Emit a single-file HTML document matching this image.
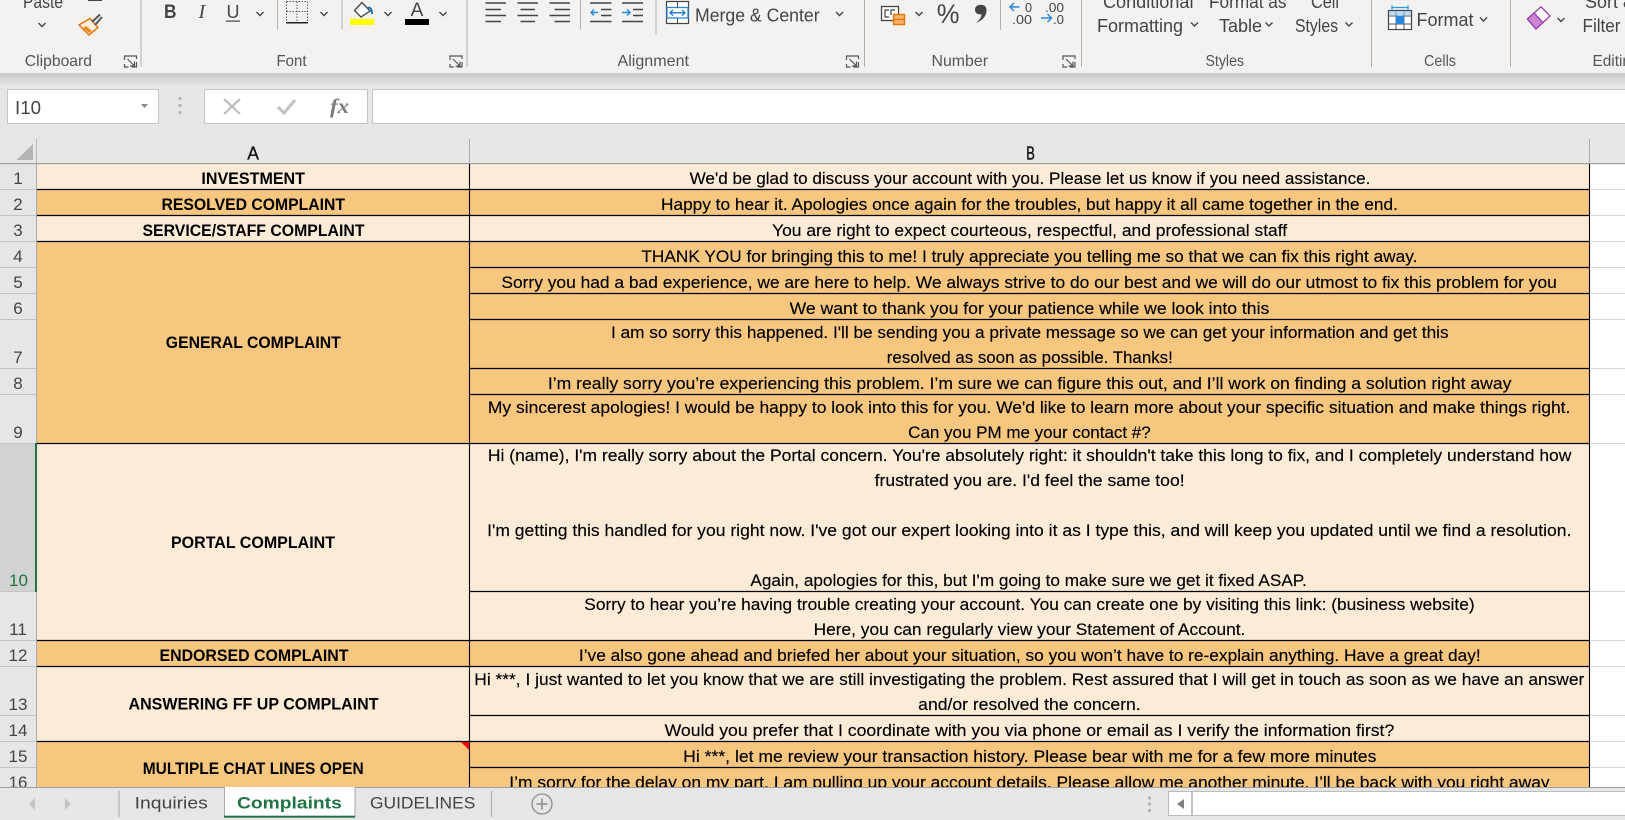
<!DOCTYPE html>
<html><head><meta charset="utf-8"><title>Complaints</title>
<style>
html,body{margin:0;padding:0;width:1625px;height:820px;overflow:hidden;background:#e6e6e6}
svg{display:block}
text{font-family:"Liberation Sans",sans-serif;white-space:pre}
.c{font-size:16.8px;fill:#000;stroke:#000;stroke-width:.15px}
.a{font-size:16.6px;font-weight:700;fill:#000}
.n{font-size:17px;fill:#444;text-anchor:middle}
.g{font-size:16px;fill:#555}
.b{font-size:18px;fill:#444}
.t{font-size:17px;fill:#444}
.d{font-size:12.5px;fill:#444}
.ch{fill:none;stroke:#444;stroke-width:1.4}
.ln{fill:none;stroke:#444;stroke-width:1.4}
.la{fill:none;stroke:#555;stroke-width:1.2}
</style></head><body>
<svg width="1625" height="820" viewBox="0 0 1625 820" xmlns="http://www.w3.org/2000/svg">
<defs>
<linearGradient id="sh" x1="0" y1="0" x2="0" y2="1"><stop offset="0" stop-color="#c9c9c9"/><stop offset="1" stop-color="#e6e6e6"/></linearGradient>
<path id="v" class="ch" d="M-3.5 -2L0 1.5L3.5 -2"/>
<path id="l" class="la" d="M0 4V0H12V3M0 8V11H4M12 6V11H7M3 3L10 10M10 5.5V10H5.5"/>
</defs>

<!-- ribbon -->
<rect x="0" y="0" width="1625" height="73" fill="#f3f2f1"/>
<rect x="0" y="73" width="1625" height="13" fill="url(#sh)"/>
<g fill="#b3b0ad">
<rect x="140.500" y="0" width="1" height="67"/><rect x="466.500" y="0" width="1" height="67"/><rect x="864" y="0" width="1" height="67"/><rect x="1081" y="0" width="1" height="67"/><rect x="1371" y="0" width="1" height="67"/><rect x="1510" y="0" width="1" height="67"/>
<rect x="277" y="0" width="1" height="30"/><rect x="341.500" y="0" width="1" height="30"/><rect x="580" y="0" width="1" height="30"/><rect x="655.500" y="0" width="1" height="35"/><rect x="1000" y="0" width="1" height="30"/>
</g>

<text class="g" x="24.800" y="66" textLength="67.200" lengthAdjust="spacingAndGlyphs">Clipboard</text>
<text class="g" x="276.500" y="66" textLength="30" lengthAdjust="spacingAndGlyphs">Font</text>
<text class="g" x="617.500" y="66" textLength="71.500" lengthAdjust="spacingAndGlyphs">Alignment</text>
<text class="g" x="931.500" y="66" textLength="56.500" lengthAdjust="spacingAndGlyphs">Number</text>
<text class="g" x="1205.500" y="66" textLength="38.500" lengthAdjust="spacingAndGlyphs">Styles</text>
<text class="g" x="1424" y="66" textLength="32" lengthAdjust="spacingAndGlyphs">Cells</text>
<text class="g" x="1592.500" y="66" textLength="47" lengthAdjust="spacingAndGlyphs">Editing</text>

<use href="#l" x="124.500" y="56"/><use href="#l" x="450" y="56"/><use href="#l" x="846.500" y="56"/><use href="#l" x="1063" y="56"/>

<!-- clipboard -->
<text class="b" x="23" y="8" textLength="40" lengthAdjust="spacingAndGlyphs">Paste</text>
<use href="#v" x="42" y="25"/>
<rect x="88" y="0" width="14" height="1" fill="#444"/>
<path d="M79 25L90 18.500L98 27.500L89 35Z" fill="#fdf0e0" stroke="#e8760c" stroke-width="1.500"/>
<path d="M83 28L86 26L92 31L89 33Z" fill="#ee8a1e"/>
<path d="M92 22L100 14.500M95 25L102 17" stroke="#555" stroke-width="2" fill="none"/>

<!-- font -->
<text x="164" y="18" font-size="19" font-weight="700" fill="#444" textLength="12.500" lengthAdjust="spacingAndGlyphs">B</text>
<text x="198.500" y="18" font-size="20" font-style="italic" fill="#444" style="font-family:'Liberation Serif',serif">I</text>
<text x="226.500" y="18" font-size="18" fill="#444" textLength="13" lengthAdjust="spacingAndGlyphs">U</text>
<rect x="226" y="20.500" width="14" height="1.200" fill="#444"/>
<use href="#v" x="260" y="14"/>
<path d="M286.500 1.500H307.500V21M286.500 1.500V21M297 1.500V21M286.500 11.500H307.500" fill="none" stroke="#555" stroke-width="1" stroke-dasharray="1.500 1.500"/>
<rect x="286" y="22" width="22" height="1.500" fill="#222"/>
<use href="#v" x="324" y="14"/>
<path d="M362 2.500L370 11L361 17L354.500 10.500Z" fill="#fff" stroke="#444" stroke-width="1.300"/>
<path d="M367 9C369 6 372 8 372 14" fill="none" stroke="#1f6fb5" stroke-width="2"/>
<rect x="350" y="19" width="24" height="6" fill="#ffff00"/>
<use href="#v" x="388" y="14"/>
<text x="417" y="16" font-size="19" fill="#444" text-anchor="middle">A</text>
<rect x="405" y="19" width="24" height="6" fill="#000"/>
<use href="#v" x="443" y="14"/>

<!-- alignment -->
<path class="ln" d="M485.500 3H506M485.500 9.500H501M485.500 15.500H506M485.500 21.500H501"/>
<path class="ln" d="M517.500 3H538M520.500 9.500H535M517.500 15.500H538M520.500 21.500H535"/>
<path class="ln" d="M549.500 3H570M554.500 9.500H570M549.500 15.500H570M554.500 21.500H570"/>
<path class="ln" d="M590 3H611.500M601 9.500H611.500M601 15.500H611.500M590 21.500H611.500"/>
<path d="M598 12.500H591M594 9.500L591 12.500L594 15.500" fill="none" stroke="#2b88d8" stroke-width="1.500"/>
<path class="ln" d="M622 3H643M633 9.500H643M633 15.500H643M622 21.500H643"/>
<path d="M622 12.500H630M627 9.500L630 12.500L627 15.500" fill="none" stroke="#2b88d8" stroke-width="1.500"/>
<rect x="666.500" y="1.500" width="22" height="22" fill="#fff" stroke="#444" stroke-width="1.200"/>
<path d="M667 7.500H688M667 18H688M677.500 2V7M677.500 18V23" stroke="#444" stroke-width="1" fill="none"/>
<rect x="667" y="7.500" width="21" height="10.500" fill="#fff" stroke="#2b88d8" stroke-width="1.300"/>
<path d="M670 12.800H685M673 10L670 12.800L673 15.600M682 10L685 12.800L682 15.600" fill="none" stroke="#1f78c8" stroke-width="1.300"/>
<text class="b" x="695" y="21.500" textLength="124.600" lengthAdjust="spacingAndGlyphs">Merge &amp; Center</text>
<use href="#v" x="839.500" y="14"/>

<!-- number -->
<rect x="881.500" y="6.500" width="17" height="14" fill="#fff" stroke="#444" stroke-width="1.300"/>
<path d="M889 10H885V17H889M895 10H891V15" fill="none" stroke="#444" stroke-width="1.200"/>
<path d="M893.500 14.500H904.500V24.500H893.500Z" fill="#f6b26f" stroke="#e8760c" stroke-width="1.400"/>
<path d="M893.500 19.500H904.500" stroke="#e8760c" stroke-width="1.400"/>
<use href="#v" x="919" y="14"/>
<text x="936.700" y="23" font-size="27" fill="#444" textLength="22.700" lengthAdjust="spacingAndGlyphs">%</text>
<path d="M979 5C983 4 986.500 6 986.500 10C986.500 16 983 20 976 23C979.500 20 981.500 17 981.500 14.500C977 14.500 975 12.500 975 10C975 7 976.500 5.500 979 5Z" fill="#444"/>
<path d="M1019.500 7H1010M1014 3L1010 7L1014 11" fill="none" stroke="#2b88d8" stroke-width="1.500"/>
<text class="d" x="1025" y="12" font-size="13" textLength="7" lengthAdjust="spacingAndGlyphs">0</text>
<text class="d" x="1012" y="24" textLength="20" lengthAdjust="spacingAndGlyphs">.00</text>
<text class="d" x="1045" y="12" textLength="19" lengthAdjust="spacingAndGlyphs">.00</text>
<path d="M1041 18H1051.500M1047.500 14L1051.500 18L1047.500 22" fill="none" stroke="#2b88d8" stroke-width="1.500"/>
<text class="d" x="1053" y="24" textLength="11" lengthAdjust="spacingAndGlyphs">.0</text>

<!-- styles -->
<text class="b" x="1103" y="8" textLength="90.500" lengthAdjust="spacingAndGlyphs">Conditional</text>
<text class="b" x="1097" y="32" textLength="86" lengthAdjust="spacingAndGlyphs">Formatting</text>
<use href="#v" x="1194.500" y="24.500"/>
<text class="b" x="1209" y="8" textLength="77.500" lengthAdjust="spacingAndGlyphs">Format as</text>
<text class="b" x="1219" y="32" textLength="43" lengthAdjust="spacingAndGlyphs">Table</text>
<use href="#v" x="1269" y="24.500"/>
<text class="b" x="1311" y="8" textLength="28" lengthAdjust="spacingAndGlyphs">Cell</text>
<text class="b" x="1295" y="32" textLength="43" lengthAdjust="spacingAndGlyphs">Styles</text>
<use href="#v" x="1349" y="24.500"/>

<!-- cells -->
<rect x="1388.500" y="10.500" width="23" height="19" fill="#fff" stroke="#444" stroke-width="1.200"/>
<path d="M1396 11V29M1404 11V29M1389 16H1411M1389 24H1411" stroke="#555" stroke-width="1" fill="none"/>
<rect x="1395.500" y="15.500" width="9" height="8.500" fill="#2b88d8"/>
<rect x="1389" y="11" width="22" height="4" fill="#9ccaf0" opacity=".7"/>
<path d="M1392 7.500H1408M1392 5.500V9.500M1408 5.500V9.500" stroke="#2b9ad8" stroke-width="1.300" fill="none"/>
<text class="b" x="1416.500" y="26" textLength="57" lengthAdjust="spacingAndGlyphs">Format</text>
<use href="#v" x="1483.500" y="19.500"/>

<!-- editing -->
<path d="M1527.500 19L1541 6.800L1550 16L1536 29Z" fill="#fff" stroke="#9b3fb0" stroke-width="1.300"/>
<path d="M1527.500 19L1534 13L1543 22.500L1536 29Z" fill="#cb85d3" stroke="#9b3fb0" stroke-width="1.300"/>
<use href="#v" x="1561" y="20"/>
<text class="b" x="1585" y="8" textLength="50" lengthAdjust="spacingAndGlyphs">Sort &amp;</text>
<text class="b" x="1582.500" y="32" textLength="38" lengthAdjust="spacingAndGlyphs">Filter</text>

<!-- formula bar -->
<rect x="7.500" y="89.500" width="151" height="34" fill="#fff" stroke="#c6c6c6"/>
<text x="15" y="114" font-size="18" fill="#444" textLength="26" lengthAdjust="spacingAndGlyphs">I10</text>
<path d="M141 104H148L144.500 108Z" fill="#8a8a8a"/>
<g fill="#b4b4b4"><rect x="178.500" y="97" width="3" height="3"/><rect x="178.500" y="104" width="3" height="3"/><rect x="178.500" y="111" width="3" height="3"/></g>
<rect x="204.500" y="89.500" width="163" height="34" fill="#fff" stroke="#c6c6c6"/>
<path d="M224 99L240 114M240 99L224 114" stroke="#bdbdbd" stroke-width="2.200" fill="none"/>
<path d="M278 107L284 113L295 100" stroke="#c2c2c2" stroke-width="3" fill="none"/>
<text x="330" y="113" font-size="21" font-style="italic" font-weight="700" fill="#7a7a7a" style="font-family:'Liberation Serif',serif" textLength="19" lengthAdjust="spacingAndGlyphs">fx</text>
<rect x="372.500" y="89.500" width="1260" height="34" fill="#fff" stroke="#c6c6c6"/>

<!-- column headers -->
<rect x="0" y="139" width="1625" height="24" fill="#e6e6e6"/>
<path d="M33 144V160H16.500Z" fill="#b4b4b4"/>
<rect x="36" y="139" width="1" height="24" fill="#b8b8b8"/>
<rect x="469" y="139" width="1" height="24" fill="#ababab"/>
<rect x="1589" y="139" width="1" height="24" fill="#ababab"/>
<text x="247.300" y="159.300" font-size="18.500" fill="#111" stroke="#111" stroke-width=".3" textLength="11.700" lengthAdjust="spacingAndGlyphs">A</text>
<text x="1026.200" y="159.300" font-size="18.500" fill="#111" stroke="#111" stroke-width=".4" textLength="8.600" lengthAdjust="spacingAndGlyphs">B</text>

<!-- sheet background -->
<rect x="37" y="163" width="1588" height="625" fill="#fff"/>
<rect x="0" y="163" width="37" height="625" fill="#e6e6e6"/>
<rect x="0" y="443.500" width="36" height="148" fill="#d2d2d2"/>

<!-- col A fills -->
<rect x="37" y="163.500" width="432.500" height="26" fill="#fcecd7"/>
<rect x="37" y="189.500" width="432.500" height="26" fill="#f7c77f"/>
<rect x="37" y="215.500" width="432.500" height="26" fill="#fcecd7"/>
<rect x="37" y="241.500" width="432.500" height="202" fill="#f7c77f"/>
<rect x="37" y="443.500" width="432.500" height="197" fill="#fcecd7"/>
<rect x="37" y="640.500" width="432.500" height="26" fill="#f7c77f"/>
<rect x="37" y="666.500" width="432.500" height="75" fill="#fcecd7"/>
<rect x="37" y="741.500" width="432.500" height="50" fill="#f7c77f"/>
<!-- col B fills -->
<rect x="469.500" y="163.500" width="1120" height="26" fill="#fcecd7"/>
<rect x="469.500" y="189.500" width="1120" height="26" fill="#f7c77f"/>
<rect x="469.500" y="215.500" width="1120" height="26" fill="#fcecd7"/>
<rect x="469.500" y="241.500" width="1120" height="202" fill="#f7c77f"/>
<rect x="469.500" y="443.500" width="1120" height="197" fill="#fcecd7"/>
<rect x="469.500" y="640.500" width="1120" height="26" fill="#f7c77f"/>
<rect x="469.500" y="666.500" width="1120" height="75" fill="#fcecd7"/>
<rect x="469.500" y="741.500" width="1120" height="50" fill="#f7c77f"/>

<!-- gridlines right of B and row header -->
<path d="M1590 189.500H1625M1590 215.500H1625M1590 241.500H1625M1590 267.500H1625M1590 293.500H1625M1590 319.500H1625M1590 368.500H1625M1590 394.500H1625M1590 443.500H1625M1590 591.500H1625M1590 640.500H1625M1590 666.500H1625M1590 715.500H1625M1590 741.500H1625M1590 767.500H1625" stroke="#d6d6d6" fill="none"/>
<path d="M0 189.500H36M0 215.500H36M0 241.500H36M0 267.500H36M0 293.500H36M0 319.500H36M0 368.500H36M0 394.500H36M0 443.500H36M0 591.500H36M0 640.500H36M0 666.500H36M0 715.500H36M0 741.500H36M0 767.500H36" stroke="#c4c4c4" fill="none"/>
<rect x="36" y="163" width="1" height="625" fill="#a8a8a8"/>
<rect x="35" y="443" width="2" height="149" fill="#217346"/>
<rect x="0" y="163" width="1625" height="1.200" fill="#a0a0a0"/>

<!-- cell borders -->
<path d="M37 189.500H1590M37 215.500H1590M37 241.500H1590M37 443.500H1590M37 640.500H1590M37 666.500H1590M37 741.500H1590" stroke="#000" stroke-width="1.200" fill="none"/>
<path d="M469.500 267.500H1590M469.500 293.500H1590M469.500 319.500H1590M469.500 368.500H1590M469.500 394.500H1590M469.500 591.500H1590M469.500 715.500H1590M469.500 767.500H1590" stroke="#000" stroke-width="1.200" fill="none"/>
<path d="M469.500 164V790M1589.500 164V790" stroke="#000" stroke-width="1.100" fill="none"/>
<path d="M461 742H469V750Z" fill="#ff0000"/>

<!-- row numbers -->
<text class="n" x="18" y="184">1</text>
<text class="n" x="18" y="210">2</text>
<text class="n" x="18" y="236">3</text>
<text class="n" x="18" y="262">4</text>
<text class="n" x="18" y="288">5</text>
<text class="n" x="18" y="314">6</text>
<text class="n" x="18" y="363">7</text>
<text class="n" x="18" y="389">8</text>
<text class="n" x="18" y="438">9</text>
<text class="n" x="18.500" y="586" style="fill:#217346">10</text>
<text class="n" x="18" y="635">11</text>
<text class="n" x="18" y="661">12</text>
<text class="n" x="18" y="710">13</text>
<text class="n" x="18" y="736">14</text>
<text class="n" x="18" y="762">15</text>
<text class="n" x="18" y="788">16</text>

<!-- column A labels -->
<text class="a" x="201.400" y="184" textLength="103.600" lengthAdjust="spacingAndGlyphs">INVESTMENT</text>
<text class="a" x="161.500" y="210" textLength="183.500" lengthAdjust="spacingAndGlyphs">RESOLVED COMPLAINT</text>
<text class="a" x="142.500" y="236" textLength="222" lengthAdjust="spacingAndGlyphs">SERVICE/STAFF COMPLAINT</text>
<text class="a" x="165.800" y="348" textLength="175" lengthAdjust="spacingAndGlyphs">GENERAL COMPLAINT</text>
<text class="a" x="171" y="548" textLength="164" lengthAdjust="spacingAndGlyphs">PORTAL COMPLAINT</text>
<text class="a" x="159.500" y="661" textLength="189" lengthAdjust="spacingAndGlyphs">ENDORSED COMPLAINT</text>
<text class="a" x="128.500" y="709.500" textLength="250" lengthAdjust="spacingAndGlyphs">ANSWERING FF UP COMPLAINT</text>
<text class="a" x="142.700" y="774" textLength="221" lengthAdjust="spacingAndGlyphs">MULTIPLE CHAT LINES OPEN</text>

<!-- column B -->
<text class="c" x="689.600" y="184" textLength="680.800" lengthAdjust="spacingAndGlyphs">We'd be glad to discuss your account with you. Please let us know if you need assistance.</text>
<text class="c" x="661" y="210" textLength="736.900" lengthAdjust="spacingAndGlyphs">Happy to hear it. Apologies once again for the troubles, but happy it all came together in the end.</text>
<text class="c" x="772.100" y="236" textLength="515" lengthAdjust="spacingAndGlyphs">You are right to expect courteous, respectful, and professional staff</text>
<text class="c" x="641.400" y="262" textLength="776" lengthAdjust="spacingAndGlyphs">THANK YOU for bringing this to me! I truly appreciate you telling me so that we can fix this right away.</text>
<text class="c" x="501.400" y="288" textLength="1055.400" lengthAdjust="spacingAndGlyphs">Sorry you had a bad experience, we are here to help. We always strive to do our best and we will do our utmost to fix this problem for you</text>
<text class="c" x="789.600" y="314" textLength="479.700" lengthAdjust="spacingAndGlyphs">We want to thank you for your patience while we look into this</text>
<text class="c" x="611" y="338" textLength="837.600" lengthAdjust="spacingAndGlyphs">I am so sorry this happened. I'll be sending you a private message so we can get your information and get this</text>
<text class="c" x="886.800" y="363" textLength="286" lengthAdjust="spacingAndGlyphs">resolved as soon as possible. Thanks!</text>
<text class="c" x="547.900" y="389" textLength="963.500" lengthAdjust="spacingAndGlyphs">I’m really sorry you’re experiencing this problem. I’m sure we can figure this out, and I’ll work on finding a solution right away</text>
<text class="c" x="487.900" y="413" textLength="1082.500" lengthAdjust="spacingAndGlyphs">My sincerest apologies! I would be happy to look into this for you. We'd like to learn more about your specific situation and make things right.</text>
<text class="c" x="908.200" y="438" textLength="242.500" lengthAdjust="spacingAndGlyphs">Can you PM me your contact #?</text>
<text class="c" x="487.900" y="461" textLength="1083.500" lengthAdjust="spacingAndGlyphs">Hi (name), I'm really sorry about the Portal concern. You're absolutely right: it shouldn't take this long to fix, and I completely understand how</text>
<text class="c" x="874.600" y="486" textLength="310" lengthAdjust="spacingAndGlyphs">frustrated you are. I'd feel the same too!</text>
<text class="c" x="487.100" y="536" textLength="1084.300" lengthAdjust="spacingAndGlyphs">I'm getting this handled for you right now. I've got our expert looking into it as I type this, and will keep you updated until we find a resolution.</text>
<text class="c" x="750.400" y="586" textLength="556.400" lengthAdjust="spacingAndGlyphs">Again, apologies for this, but I'm going to make sure we get it fixed ASAP.</text>
<text class="c" x="584.300" y="610" textLength="890.300" lengthAdjust="spacingAndGlyphs">Sorry to hear you’re having trouble creating your account. You can create one by visiting this link: (business website)</text>
<text class="c" x="813.600" y="635" textLength="431.800" lengthAdjust="spacingAndGlyphs">Here, you can regularly view your Statement of Account.</text>
<text class="c" x="578.900" y="661" textLength="901.800" lengthAdjust="spacingAndGlyphs">I’ve also gone ahead and briefed her about your situation, so you won’t have to re-explain anything. Have a great day!</text>
<text class="c" x="474.300" y="685" textLength="1110" lengthAdjust="spacingAndGlyphs">Hi ***, I just wanted to let you know that we are still investigating the problem. Rest assured that I will get in touch as soon as we have an answer</text>
<text class="c" x="918.200" y="710" textLength="222.500" lengthAdjust="spacingAndGlyphs">and/or resolved the concern.</text>
<text class="c" x="664.600" y="736" textLength="729.700" lengthAdjust="spacingAndGlyphs">Would you prefer that I coordinate with you via phone or email as I verify the information first?</text>
<text class="c" x="683.200" y="762" textLength="693.200" lengthAdjust="spacingAndGlyphs">Hi ***, let me review your transaction history. Please bear with me for a few more minutes</text>
<text class="c" x="509.300" y="788" textLength="1040.300" lengthAdjust="spacingAndGlyphs">I’m sorry for the delay on my part. I am pulling up your account details. Please allow me another minute. I’ll be back with you right away</text>

<!-- tab bar -->
<rect x="0" y="787" width="1625" height="33" fill="#e6e6e6"/>
<rect x="0" y="787" width="1625" height="1" fill="#a0a0a0"/>
<path d="M35 798L29 804L35 810Z" fill="#c4c4c4"/>
<path d="M65 798L71 804L65 810Z" fill="#c4c4c4"/>
<rect x="118.500" y="791" width="1" height="26" fill="#a8a8a8"/>
<text class="t" x="134.700" y="808.300" textLength="73.100" lengthAdjust="spacingAndGlyphs">Inquiries</text>
<rect x="224.500" y="787" width="130.500" height="30" fill="#fff"/>
<rect x="224" y="787" width="1" height="30" fill="#a8a8a8"/>
<rect x="354.500" y="787" width="1" height="30" fill="#a8a8a8"/>
<rect x="224" y="815.700" width="131" height="2" fill="#217346"/>
<text x="237" y="808.300" font-size="17" font-weight="700" fill="#217346" textLength="104.800" lengthAdjust="spacingAndGlyphs">Complaints</text>
<text class="t" x="370" y="808.300" textLength="105.300" lengthAdjust="spacingAndGlyphs">GUIDELINES</text>
<rect x="491" y="791" width="1" height="26" fill="#a8a8a8"/>
<circle cx="542" cy="804" r="10" fill="none" stroke="#8a8a8a" stroke-width="1.300"/>
<path d="M542 798.500V809.500M536.500 804H547.500" stroke="#8a8a8a" stroke-width="1.500" fill="none"/>
<g fill="#b4b4b4"><rect x="1148" y="796.500" width="3" height="3"/><rect x="1148" y="802.500" width="3" height="3"/><rect x="1148" y="809" width="3" height="3"/></g>
<rect x="1168.500" y="791.500" width="470" height="24" fill="#fff" stroke="#bdbdbd"/>
<rect x="1191" y="792" width="2" height="23" fill="#c4c4c4"/>
<path d="M1184 799V809L1177 804Z" fill="#808080"/>
</svg>
</body></html>
